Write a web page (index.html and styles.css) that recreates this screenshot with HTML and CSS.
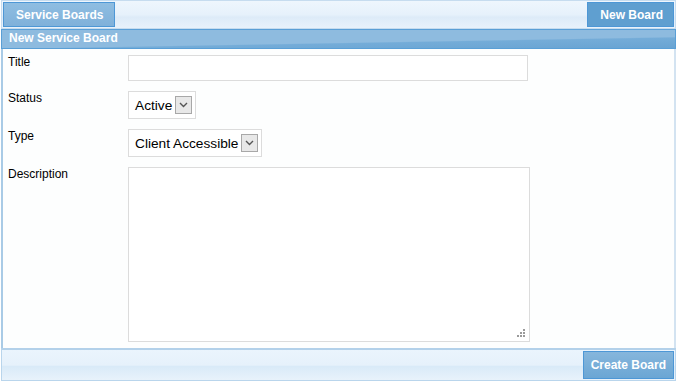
FILE: index.html
```html
<!DOCTYPE html>
<html lang="en">
	<head>
		<meta charset="UTF-8" />
		<title>New Service Board</title>
		<link rel="stylesheet" href="styles.css">
	</head>
	<body>
		<div class="page">
			<div class="toolbar">
				<a class="tab-button">Service Boards</a>
				<a class="tab-button active">New Board</a>
			</div>
			<div class="panel-title">New Service Board</div>
			<div class="panel-body">
				<div class="row">
					<label class="field-label" for="title">Title</label>
					<input class="text-input" type="text" id="title" />
				</div>
				<div class="row">
					<label class="field-label">Status</label>
					<div class="select-box">
						<span>Active</span>
						<span class="select-arrow">
							<svg width="9" height="6" viewBox="0 0 9 6"><path d="M1 1 L4.5 4.5 L8 1" fill="none" stroke="#555" stroke-width="1.4"/></svg>
						</span>
					</div>
				</div>
				<div class="row">
					<label class="field-label">Type</label>
					<div class="select-box">
						<span>Client Accessible</span>
						<span class="select-arrow">
							<svg width="9" height="6" viewBox="0 0 9 6"><path d="M1 1 L4.5 4.5 L8 1" fill="none" stroke="#555" stroke-width="1.4"/></svg>
						</span>
					</div>
				</div>
				<div class="row">
					<label class="field-label" for="description">Description</label>
					<div class="area-wrap">
						<textarea class="text-area" id="description"></textarea>
						<svg class="grip" width="8" height="8" viewBox="0 0 8 8" fill="#9a9a9a">
							<rect x="6" y="0" width="2" height="2"/>
							<rect x="3" y="3" width="2" height="2"/>
							<rect x="6" y="3" width="2" height="2"/>
							<rect x="0" y="6" width="2" height="2"/>
							<rect x="3" y="6" width="2" height="2"/>
							<rect x="6" y="6" width="2" height="2"/>
						</svg>
					</div>
				</div>
			</div>
			<div class="footer">
				<a class="tab-button active">Create Board</a>
			</div>
		</div>
	</body>
</html>
```

FILE: styles.css
```css
body {
	margin: 0;
	background-color: #ffffff;
	font-family: "Liberation Sans", Arial, sans-serif;
	font-size: 12px;
	color: #000;
}
.page {
	width: 675px;
	margin: 0 0 0 1px;
}
.toolbar {
	display: flex;
	justify-content: space-between;
	height: 25px;
	padding: 1px;
	border: 1px solid #c6dcef;
	background: linear-gradient(#eef6fd, #e6f1fb 50%, #ddebf8 60%, #e8f2fb);
}
.footer {
	display: flex;
	justify-content: flex-end;
	height: 28px;
	padding: 1px;
	border: 1px solid #b9d5ec;
	border-top: 2px solid #b3d1ea;
	background: linear-gradient(#eaf4fd, #e6f1fb 50%, #d9eaf8 55%, #e8f2fb);
}
.tab-button {
	display: flex;
	align-items: center;
	padding: 0 11px 0 12px;
	border: 1px solid #4d97d6;
	background: linear-gradient(#8fbde1, #7fb1da);
	color: #fff;
	font-weight: bold;
	font-size: 12px;
	cursor: pointer;
}
.tab-button.active {
	padding: 0 10px 0 12px;
	background: #5f9fd0;
	border-color: #4d97d6;
}
.footer .tab-button {
	padding: 0 7px;
	background: linear-gradient(#86b6dc, #6ba6d4);
}
.panel-title {
	height: 18px;
	line-height: 17px;
	padding: 0 7px;
	border: 1px solid #5a9fd6;
	background: linear-gradient(179deg, #8ebbdf 62%, #74acd8 66%, #69a4d3);
	color: #fff;
	font-weight: bold;
	font-size: 12px;
}
.panel-body {
	padding: 6px 0 6px 0;
	border-left: 2px solid #a9cbe6;
	border-right: 2px solid #d3e3f1;
	background: #fdfefe;
}
.row {
	display: flex;
	align-items: flex-start;
	margin-bottom: 10px;
}
.row:last-child {
	margin-bottom: 0;
}
.field-label {
	width: 120px;
	padding: 0 0 0 5px;
	line-height: 14px;
}
.text-input {
	box-sizing: border-box;
	width: 400px;
	height: 26px;
	margin: 0;
	padding: 0 2px;
	border: 1px solid #dcdcdc;
	background: #fff;
}
.select-box {
	display: flex;
	align-items: center;
	gap: 3px;
	height: 26px;
	padding: 0 3px 0 6px;
	border: 1px solid #dcdcdc;
	background: #fff;
	font-size: 13.7px;
}
.select-arrow {
	display: flex;
	align-items: center;
	justify-content: center;
	width: 15px;
	height: 16px;
	border: 1px solid #a8a8a8;
	background: #e8e8e8;
}
.area-wrap {
	position: relative;
	display: flex;
}
.text-area {
	box-sizing: border-box;
	width: 402px;
	height: 175px;
	margin: 0;
	padding: 0;
	border: 1px solid #dcdcdc;
	background: #fff;
	resize: none;
}
.grip {
	position: absolute;
	right: 5px;
	bottom: 5px;
}
```
